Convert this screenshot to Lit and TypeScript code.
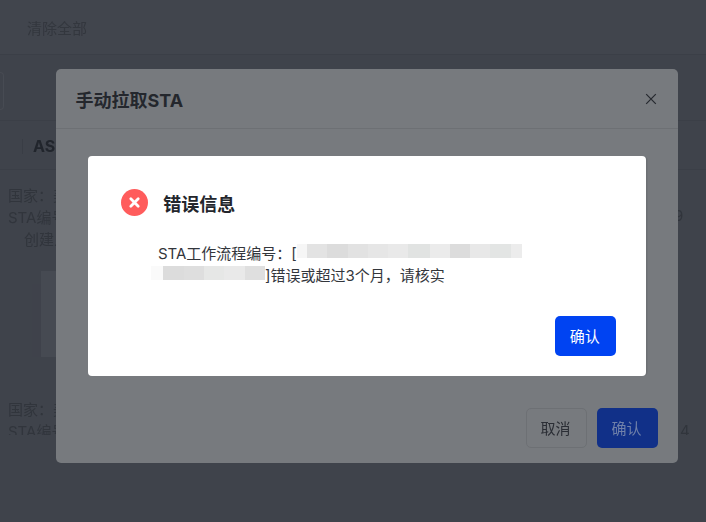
import { LitElement, html, css } from "lit";
import { customElement } from "lit/decorators.js";

const LINE_ONE = ["#f6f6f6","#e3e3e3","#dcdcdc","#e2e2e2","#e6e6e6","#e9e9e9","#e1e3e2","#ebebeb","#dcdcdc","#e8e8e8","#e3e5e4","#ececec"];
const LINE_ONE_W = [10,20,21,20,20,20,22,20,20,20,21,11];
const LINE_TWO = ["#fafafa","#dcdcdc","#dedede","#e6e7e6","#e9e9e9","#dfdfdf"];
const LINE_TWO_W = [12,21,20,20,21,20];

@customElement("app-root")
export class AppRoot extends LitElement {
  static styles = css`
    :host {
      display: block;
      position: relative;
      width: 706px;
      height: 522px;
      overflow: hidden;
      background: #3f434b;
      font-family: "Inter", "Liberation Sans", "Noto Sans CJK SC", sans-serif;
      font-size: 15px;
      color: #31353c;
    }
    .stage { position: absolute; inset: 0; filter: blur(0.35px); }
    .page { display: flex; flex-direction: column; height: 100%; }
    .toolbar {
      height: 55px;
      flex: none;
      box-sizing: border-box;
      border-bottom: 1px solid #3b3f47;
      padding-left: 27px;
      display: flex;
      align-items: center;
      color: #33373e;
      background: #41454d;
    }
    .filters { height: 66px; flex: none; box-sizing: border-box; border-bottom: 1px solid #3b3f47; padding-top: 17px; }
    .filter-box { width: 4px; height: 38px; box-sizing: border-box; border: 1px solid #474b53; border-left: 0; border-radius: 0 4px 4px 0; }
    .tabs {
      height: 49px;
      flex: none;
      box-sizing: border-box;
      border-bottom: 1px solid #3b3f47;
      padding: 2px 0 0 22px;
      display: flex;
      align-items: center;
      gap: 10px;
      font-weight: 700;
      font-size: 16px;
      color: #21252c;
    }
    .tab-rule { width: 1px; height: 15px; background: #393d45; }
    .row { position: relative; height: 215px; flex: none; box-sizing: border-box; padding: 15px 0 0 8px; line-height: 22px; }
    .row .third { padding-left: 16px; }
    .row .side { position: absolute; left: 674px; top: 35px; }
    .row.last { height: 50px; flex: none; overflow: hidden; padding-top: 14px; line-height: 21.5px; }
    .row.last .side { left: 680px; top: 35px; }
    .thumb { position: absolute; left: 32px; top: 101px; display: flex; align-items: flex-end; }
    .thumb-dark { width: 9px; height: 73px; background: #3f424b; }
    .thumb-light { width: 24px; height: 86px; background: #464a52; }

    .dialog { position: absolute; box-sizing: border-box; display: flex; flex-direction: column; }
    .outer {
      left: 56px; top: 69px; width: 622px; height: 394px;
      background: #777a7e;
      border-radius: 5px;
      color: #26292f;
    }
    .outer-head {
      height: 60px;
      flex: none;
      box-sizing: border-box;
      border-bottom: 1px solid #6d7074;
      display: flex;
      align-items: center;
      justify-content: space-between;
      padding: 0 21px 0 19.5px;
    }
    .outer-title { font-size: 18px; font-weight: 700; color: #24272d; }
    .outer-foot { margin-top: auto; display: flex; justify-content: flex-end; gap: 10px; padding: 0 20px 15px 0; }
    .btn {
      box-sizing: border-box;
      width: 61px;
      height: 40px;
      border-radius: 5px;
      display: flex;
      align-items: center;
      justify-content: center;
      font-size: 15px;
      font-family: inherit;
      padding: 0 2px 1px 0;
    }
    .ghost { border: 1px solid #6d7074; color: #2b2e35; }
    .dim { background: #113088; color: #7080a9; }
    .inner {
      left: 88.3px; top: 156.3px; width: 558px; height: 220px;
      background: #fff;
      border-radius: 4px;
      box-shadow: 2px 0 0 -0.5px #6d7074;
      padding: 33px 30px 20px 33px;
      color: #33363c;
    }
    .inner-head { display: flex; align-items: center; gap: 15px; height: 27px; }
    .inner-title { font-size: 18px; font-weight: 700; color: #23262c; }
    .msg { margin: 27px 0 0 36.7px; line-height: 22px; }
    .msg-line { display: flex; align-items: center; white-space: nowrap; height: 22px; }
    .msg-line .mosaic { position: relative; top: -3px; }
    .msg-line.wrapped { margin-left: -7px; }
    .mosaic { display: flex; height: 14px; }
    .mosaic span { display: block; height: 100%; }
    .inner-foot { margin-top: auto; display: flex; justify-content: flex-end; }
    .primary { background: #0043f2; color: #fff; }
    svg { display: block; flex: none; }
  `;

  private mosaic(colors: string[], widths: number[]) {
    return html`<div class="mosaic">
      ${colors.map((c, i) => html`<span style="background:${c};width:${widths[i]}px"></span>`)}
    </div>`;
  }

  render() {
    return html`
      <div class="stage">
        <div class="page">
          <div class="toolbar">清除全部</div>
          <div class="filters"><div class="filter-box"></div></div>
          <div class="tabs"><span class="tab-rule"></span><span>AS</span></div>
          <div class="row">
            <div>国家：美</div>
            <div>STA编号</div>
            <div class="third">创建人</div>
            <div class="side">9</div>
            <div class="thumb"><div class="thumb-dark"></div><div class="thumb-light"></div></div>
          </div>
          <div class="row last">
            <div>国家：美</div>
            <div>STA编号</div>
            <div class="side">4</div>
          </div>
        </div>

        <div class="dialog outer">
          <div class="outer-head">
            <span class="outer-title">手动拉取STA</span>
            <svg width="12" height="12" viewBox="0 0 12 12" fill="none" stroke="#26292f" stroke-width="1.2">
              <path d="M1.2 1.2 L10.8 10.8 M10.8 1.2 L1.2 10.8"></path>
            </svg>
          </div>
          <div class="outer-foot">
            <div class="btn ghost">取消</div>
            <div class="btn dim">确认</div>
          </div>
        </div>

        <div class="dialog inner">
          <div class="inner-head">
            <svg width="27" height="27" viewBox="0 0 27 27">
              <circle cx="13.5" cy="13.5" r="13.5" fill="#ff5c5c"></circle>
              <path d="M9.8 9.8 L17.2 17.2 M17.2 9.8 L9.8 17.2" stroke="#fff" stroke-width="2.8" stroke-linecap="round"></path>
            </svg>
            <span class="inner-title">错误信息</span>
          </div>
          <div class="msg">
            <div class="msg-line"><span>STA工作流程编号：[</span>${this.mosaic(LINE_ONE, LINE_ONE_W)}</div>
            <div class="msg-line wrapped">${this.mosaic(LINE_TWO, LINE_TWO_W)}<span>]错误或超过3个月，请核实</span></div>
          </div>
          <div class="inner-foot"><div class="btn primary">确认</div></div>
        </div>
      </div>
    `;
  }
}
